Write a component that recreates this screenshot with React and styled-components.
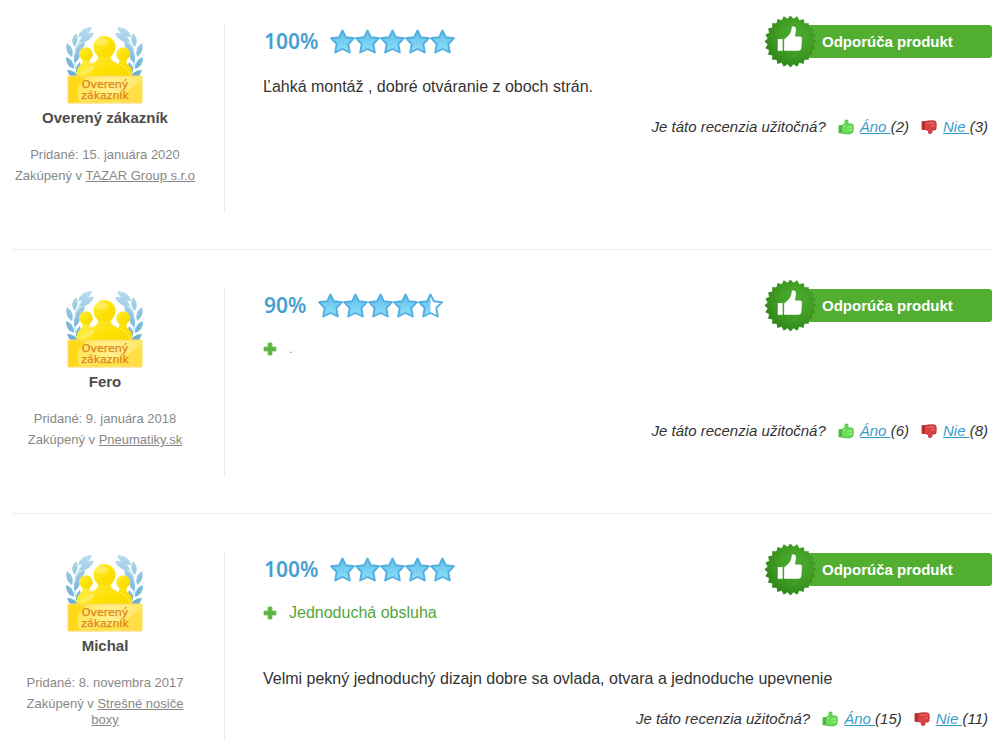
import React from "react";
import styled, { createGlobalStyle } from "styled-components";

const GlobalStyle = createGlobalStyle`
  *, *::before, *::after { box-sizing: border-box; }
  body {
    margin: 0;
    background: #fff;
    color: #333;
    font-family: "Liberation Sans", Arial, sans-serif;
    font-size: 16px;
  }
  p, h3, ul { margin: 0; padding: 0; }
`;

const ReviewList = styled.main`
  padding: 0 10px 0 12px;
`;

const Review = styled.article`
  display: flex;
  padding: 38px 0;
  border-bottom: 1px solid #ececec;

  &:first-child { padding-top: 24px; }
  &:last-child { border-bottom: 0; padding-bottom: 8px; }
`;

const Author = styled.aside`
  flex: 0 0 213px;
  min-height: 187px;
  padding-right: 26px;
  border-right: 1px solid #e8e8e8;
  text-align: center;
  color: #888;
  font-size: 13px;
  line-height: 16px;
`;

const AuthorName = styled.h3`
  margin-bottom: 19px;
  color: #4c4c4c;
  font-size: 15px;
  line-height: 20px;
`;

const AuthorLine = styled.p`
  margin-bottom: 5px;
`;

const ShopLink = styled.a`
  color: inherit;
`;

const BadgeArt = styled.svg`
  display: block;
  width: 80px;
  height: 84px;
  margin: 0 auto;
`;

const Content = styled.div`
  flex: 1;
  min-width: 0;
  padding: 0 1px 0 38px;
`;

const Header = styled.header`
  display: flex;
  align-items: center;
  height: 35px;
  margin-bottom: 16px;
`;

const Percent = styled.strong`
  margin-right: 12px;
  padding-left: 1px;
  color: #45a1ce;
  font-family: "Noto Sans", sans-serif;
  font-size: 21px;
  font-weight: 600;
  line-height: 27px;
`;

const Stars = styled.svg`
  width: 126px;
  height: 25px;
`;

const Recommend = styled.div`
  display: flex;
  align-items: center;
  width: 202px;
  height: 33px;
  margin-left: auto;
  border-radius: 3px;
  background: #52ae30;
  color: #fff;
  font-size: 15px;
  font-weight: bold;
`;

const SealArt = styled.svg`
  flex: none;
  width: 53px;
  height: 53px;
  margin: 0 5px 0 -26px;
`;

const Pros = styled.ul`
  && { padding-bottom: 44px; }
  list-style: none;
`;

const Pro = styled.li`
  display: flex;
  align-items: center;
  gap: 12px;
  color: ${(p) => (p.$muted ? "#777" : "#53a63c")};
  font-size: ${(p) => (p.$muted ? "12px" : "16px")};
  line-height: 20px;
`;

const PlusArt = styled.svg`
  width: 14px;
  height: 14px;
`;

const Comment = styled.p`
  line-height: 24px;
`;

const Helpful = styled.div`
  display: flex;
  justify-content: flex-end;
  align-items: center;
  gap: 12px;
  margin-top: 18px;
  padding-right: 4px;
  font-size: 15px;
  font-style: italic;
  line-height: 20px;
`;

const Vote = styled.span`
  display: flex;
  align-items: center;
  gap: 6px;
`;

const VoteLink = styled.a`
  color: #3b9dcc;
  white-space: pre;
`;

const VoteArt = styled.svg`
  width: 16px;
  height: 16px;
`;

// Each leaf runs from its base to its tip: x1, y1, x2, y2.
const leaves = [
  [13, 13, 27, 3], [14, 18, 29, 9], [9, 23, 11, 9], [11, 29, 20, 17],
  [7, 33, 2, 19], [10, 39, 14, 26], [9, 45, 1, 33], [12, 50, 15, 38],
  [14, 55, 2, 46],
];

function leafPath([x1, y1, x2, y2]) {
  const mx = (x1 + x2) / 2;
  const my = (y1 + y2) / 2;
  const dx = (y2 - y1) * 0.38;
  const dy = (x1 - x2) * 0.38;
  return `M${x1} ${y1} Q${mx + dx} ${my + dy} ${x2} ${y2} Q${mx - dx} ${my - dy} ${x1} ${y1}`;
}

function Laurel({ id }) {
  return (
    <g fill={`url(#${id}-leaf)`}>
      <path d="M22 10 Q6 22 10 42 Q12 50 17 56" fill="none" stroke="#a5d1e6" strokeWidth="1" />
      {leaves.map((leaf, i) => <path key={i} d={leafPath(leaf)} />)}
    </g>
  );
}

function VerifiedBadge({ id }) {
  return (
    <BadgeArt viewBox="0 0 80 84" role="img" aria-label="Overený zákazník">
      <defs>
        <linearGradient id={`${id}-gold`} x1="0" y1="0" x2="1" y2="1">
          <stop offset="0" stopColor="#ffec45" />
          <stop offset="0.55" stopColor="#fce205" />
          <stop offset="1" stopColor="#f9d500" />
        </linearGradient>
        <linearGradient id={`${id}-plate`} x1="0" y1="0" x2="1" y2="0">
          <stop offset="0" stopColor="#ffe34a" />
          <stop offset="0.6" stopColor="#fff08c" />
          <stop offset="1" stopColor="#ffe766" />
        </linearGradient>
        <linearGradient id={`${id}-leaf`} gradientUnits="userSpaceOnUse" x1="20" y1="2" x2="4" y2="56">
          <stop offset="0" stopColor="#b9deee" />
          <stop offset="1" stopColor="#5fa9d0" />
        </linearGradient>
      </defs>
      <Laurel id={id} />
      <g transform="translate(79 0) scale(-1 1)"><Laurel id={id} /></g>
      <g fill={`url(#${id}-gold)`}>
        <path d="M12 56 Q10 43 17 40 Q18 38 17 34 H25 Q24 38 26 41 H53 Q55 38 54 34 H62 Q61 38 62 40 Q69 43 67 56Z" />
        <circle cx="21" cy="30" r="6.800" />
        <circle cx="58" cy="30" r="6.800" />
        <path d="M13 56 Q14 43 27 39 Q34 37 33 31 H46 Q45 37 52 39 Q65 43 66 56Z" stroke="#fff08a" strokeWidth=".7" />
        <circle cx="39.500" cy="23" r="11" />
      </g>
      <ellipse cx="37" cy="18" rx="6" ry="4" fill="#fff477" opacity=".6" />
      <path d="M15 51 Q18 43 30 41 Q27 51 15 51" fill="#fff272" opacity=".7" />
      <rect x="3" y="52" width="74" height="27" rx="1" fill={`url(#${id}-plate)`} stroke="#ffd65a" />
      <path d="M4 53 L22 53 Q7 64 15 78 L4 78Z" fill="#fdd406" opacity=".75" />
      <path d="M15 78 Q55 75 76 57 V78Z" fill="#ffd92b" opacity=".65" />
      <g fill="#e2841a" fontFamily="DejaVu Sans, sans-serif" fontSize="11" textAnchor="middle" stroke="#e2841a" strokeWidth=".25">
        <text x="40" y="64">Overený</text>
        <text x="40" y="75">zákazník</text>
      </g>
    </BadgeArt>
  );
}

const starPath =
  "M12.5 1.500 L15.800 8.200 L24 9.200 L18.300 15 L19.800 23.500 L12.500 20 L5.200 23.500 L6.700 15 L1 9.200 L9.200 8.200Z";

function StarRating({ value, id }) {
  return (
    <Stars viewBox="0 0 126 25" role="img" aria-label={`${value} z 5`}>
      <defs>
        <linearGradient id={`${id}-star`} x1="0" y1="0" x2="0" y2="1">
          <stop offset="0" stopColor="#5dbcec" />
          <stop offset="1" stopColor="#8fe0f9" />
        </linearGradient>
        <clipPath id={`${id}-half`}><rect x="0" y="0" width="12.5" height="26" /></clipPath>
      </defs>
      {[0, 1, 2, 3, 4].map((i) => {
        const half = value - i < 1;
        return (
          <g key={i} transform={`translate(${i * 25} 0)`} strokeLinejoin="round">
            <path d={starPath} fill="#fff" />
            <path d={starPath} fill={`url(#${id}-star)`} clipPath={half ? `url(#${id}-half)` : undefined} />
            <path d={starPath} fill="none" stroke="#52aee0" strokeWidth="1.9" />
          </g>
        );
      })}
    </Stars>
  );
}

const sealPoints = Array.from({ length: 48 }, (_, i) => {
  const r = i % 2 ? 23.5 : 26.5;
  const a = (i * Math.PI) / 24 - Math.PI / 2;
  return `${(27 + r * Math.cos(a)).toFixed(1)},${(27 + r * Math.sin(a)).toFixed(1)}`;
}).join(" ");

function Seal({ id }) {
  return (
    <SealArt viewBox="0 0 54 54" aria-hidden="true">
      <defs>
        <radialGradient id={`${id}-seal`} cx=".6" cy=".4" r=".6">
          <stop offset="0" stopColor="#4fab30" />
          <stop offset="0.5" stopColor="#43a026" />
          <stop offset="1" stopColor="#30871a" />
        </radialGradient>
      </defs>
      <polygon points={sealPoints} fill={`url(#${id}-seal)`} />
      <path d="M14 24.500H19V36.500H14Z" fill="#fff" />
      <path d="M20.500 25 L24 22 Q28 18 28 14 Q28 11.500 30 11.500 Q33 12 32.500 16 L31.500 22 H37 Q39 22.500 38.700 25 L38 34 Q37.500 36.500 35.500 36.500 H20.500Z" fill="#fff" />
    </SealArt>
  );
}

function ThumbUp() {
  return (
    <VoteArt viewBox="0 0 16 16" aria-hidden="true">
      <path d="M1 6.500 H4 L7 5 V1.500 Q8.500 0 10 2 V5 H14 Q15.800 5.500 15 8 Q16 9.500 15 11 Q15.300 13 14 14 Q12 15.300 6 14.800 L4 14 H1Z" fill="#6bdc55" stroke="#4dbd3e" strokeWidth=".9" />
      <path d="M5 8 L8 6.500 M9.500 8 H14 M9.500 11 H14" stroke="#97ee82" fill="none" />
      <path d="M1.400 7 H4 V13.500 H1.400Z" fill="#4cb443" />
    </VoteArt>
  );
}

function ThumbDown() {
  return (
    <VoteArt viewBox="0 0 16 16" aria-hidden="true">
      <path d="M1 2.500 H4 Q8 1.300 14 2 Q15.500 2.500 15 5 Q15.900 6.500 15 8 Q15.500 10.500 14 11 H11 V13.500 Q9.500 15.500 7.500 14 V11.500 L4 10.500 H1Z" fill="#d84242" stroke="#b93434" strokeWidth=".9" />
      <path d="M5.500 4 H14 M9.500 7 H14" stroke="#e77470" fill="none" />
      <path d="M1.400 3 H4 V10 H1.400Z" fill="#b03030" />
    </VoteArt>
  );
}

function Plus() {
  return (
    <PlusArt viewBox="0 0 14 14" aria-hidden="true">
      <path d="M5 1H9V5H13V9H9V13H5V9H1V5H5Z" fill="#5bb342" stroke="#79bf62" strokeWidth=".8" />
    </PlusArt>
  );
}

const reviews = [
  {
    id: "r1", name: "Overený zákazník", date: "15. januára 2020", shop: "TAZAR Group s.r.o",
    percent: 100, text: "Ľahká montáž , dobré otváranie z oboch strán.", yes: 2, no: 3,
  },
  {
    id: "r2", name: "Fero", date: "9. januára 2018", shop: "Pneumatiky.sk",
    percent: 90, pro: ".", proMuted: true, yes: 6, no: 8,
  },
  {
    id: "r3", name: "Michal", date: "8. novembra 2017", shop: "Strešné nosiče boxy",
    percent: 100, pro: "Jednoduchá obsluha",
    text: "Velmi pekný jednoduchý dizajn dobre sa ovlada, otvara a jednoduche upevnenie",
    yes: 15, no: 11,
  },
];

function ReviewItem({ review: r }) {
  return (
    <Review>
      <Author>
        <VerifiedBadge id={r.id} />
        <AuthorName>{r.name}</AuthorName>
        <AuthorLine>Pridané: {r.date}</AuthorLine>
        <AuthorLine>Zakúpený v <ShopLink href="#">{r.shop}</ShopLink></AuthorLine>
      </Author>
      <Content>
        <Header>
          <Percent>{r.percent}%</Percent>
          <StarRating value={r.percent / 20} id={r.id} />
          <Recommend><Seal id={r.id} />Odporúča produkt</Recommend>
        </Header>
        {r.pro && <Pros><Pro $muted={r.proMuted}><Plus />{r.pro}</Pro></Pros>}
        {r.text && <Comment>{r.text}</Comment>}
        <Helpful>
          <span>Je táto recenzia užitočná?</span>
          <Vote><ThumbUp /><span><VoteLink href="#">{"Áno "}</VoteLink>({r.yes})</span></Vote>
          <Vote><ThumbDown /><span><VoteLink href="#">{"Nie "}</VoteLink>({r.no})</span></Vote>
        </Helpful>
      </Content>
    </Review>
  );
}

export default function App() {
  return (
    <>
      <GlobalStyle />
      <ReviewList>
        {reviews.map((r) => <ReviewItem key={r.id} review={r} />)}
      </ReviewList>
    </>
  );
}
